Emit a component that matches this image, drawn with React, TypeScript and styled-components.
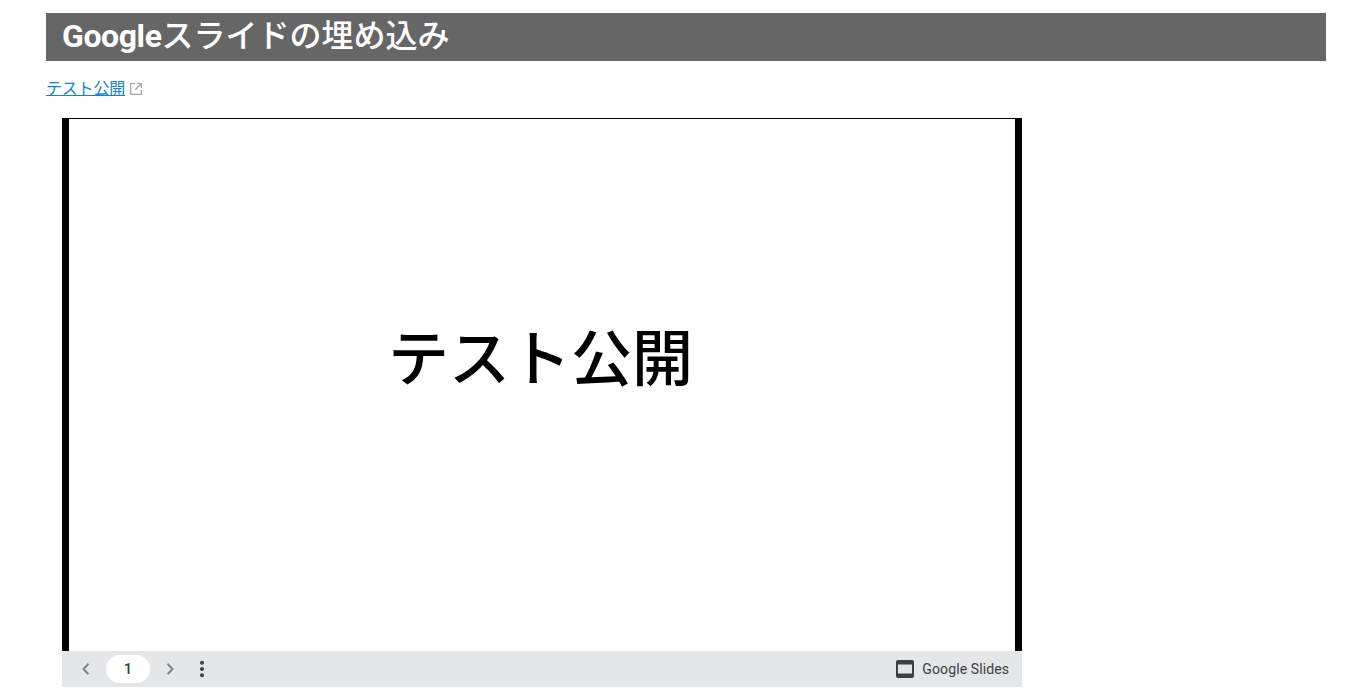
import React from "react";
import styled, { createGlobalStyle } from "styled-components";

const Global = createGlobalStyle`
  html, body { margin: 0; padding: 0; background: #fff; }
  body { font-family: Roboto, "Noto Sans CJK JP", sans-serif; color: #333; overflow: hidden; }
`;
const Page = styled.main`
  width: 1280px;
  margin-left: 46px;
  padding-top: 13px;
`;
const Title = styled.h2`
  margin: 0;
  height: 48px;
  padding: 0 16px;
  background: #666;
  color: #fff;
  font-size: 32px;
  font-weight: 700;
  line-height: 46px;
`;
const TitleLatin = styled.span`
  letter-spacing: -0.4px;
`;
const TitleKana = styled.span`
  font-weight: 500;
`;
const LinkRow = styled.p`
  margin: 0;
  padding-top: 18px;
  height: 40px;
  box-sizing: border-box;
  display: flex;
  align-items: flex-start;
  gap: 4px;
  font-size: 16px;
  line-height: 20px;
`;
const TextLink = styled.a`
  color: #0f83d6;
  text-decoration: underline;
  letter-spacing: -0.2px;
`;
const ExternalIcon = styled.svg`
  width: 14px;
  height: 14px;
  margin-top: 3px;
  color: #aaa;
`;
const Embed = styled.section`
  width: 960px;
  height: 569px;
  margin: 17px 0 0 16px;
  display: flex;
  flex-direction: column;
`;
const Slide = styled.div`
  flex: 1;
  box-sizing: border-box;
  border-top: 1px solid #000;
  border-left: 7px solid #000;
  border-right: 7px solid #000;
  padding: 0 3px 50px 0;
  display: flex;
  align-items: center;
  justify-content: center;
  background: #fff;
`;
const SlideText = styled.div`
  font-family: "Liberation Sans", "Noto Sans CJK JP", sans-serif;
  font-size: 61px;
  font-weight: 500;
  line-height: 80px;
  color: #000;
`;
const Bar = styled.div`
  height: 36px;
  flex: none;
  background: #e5e6e8;
  display: flex;
  align-items: center;
  padding: 0 13px 0 16px;
  color: #3c4043;
`;
const Chevron = styled.svg`
  width: 16px;
  height: 16px;
  color: #80868b;
`;
const PageNumber = styled.div`
  width: 44px;
  height: 28px;
  margin: 0 12px;
  border-radius: 14px;
  background: #fff;
  text-align: center;
  font-size: 15px;
  font-weight: 500;
  line-height: 29px;
`;
const Dots = styled.svg`
  width: 6px;
  height: 18px;
  margin-left: 21px;
  color: #3c4043;
`;
const Brand = styled.div`
  margin-left: auto;
  display: flex;
  align-items: center;
  gap: 8px;
  font-size: 14px;
  letter-spacing: 0.1px;
`;
const SlidesIcon = styled.svg`
  width: 18px;
  height: 18px;
`;

export default function App() {
  return (
    <>
      <Global />
      <Page>
        <Title>
          <TitleLatin>Google</TitleLatin>
          <TitleKana>スライドの埋め込み</TitleKana>
        </Title>
        <LinkRow>
          <TextLink href="#">テスト公開</TextLink>
          <ExternalIcon viewBox="0 0 14 14" fill="none" stroke="currentColor" strokeWidth="1.4">
            <path d="M6 1.6H1.6v10.8h10.8V8" />
            <path d="M8 1.6h4.4V6M12.2 1.8 6 8" />
          </ExternalIcon>
        </LinkRow>
        <Embed>
          <Slide>
            <SlideText>テスト公開</SlideText>
          </Slide>
          <Bar>
            <Chevron viewBox="0 0 16 16" fill="none" stroke="currentColor" strokeWidth="2">
              <path d="M10.5 2.8 5.5 8l5 5.2" />
            </Chevron>
            <PageNumber>1</PageNumber>
            <Chevron viewBox="0 0 16 16" fill="none" stroke="currentColor" strokeWidth="2">
              <path d="M5.5 2.8 10.5 8l-5 5.2" />
            </Chevron>
            <Dots viewBox="0 0 6 18" fill="currentColor">
              <circle cx="3" cy="2.8" r="2" />
              <circle cx="3" cy="9" r="2" />
              <circle cx="3" cy="15.2" r="2" />
            </Dots>
            <Brand>
              <SlidesIcon viewBox="0 0 18 18">
                <path fillRule="evenodd" fill="#3c4043" d="M2 0h14a2 2 0 0 1 2 2v14a2 2 0 0 1-2 2H2a2 2 0 0 1-2-2V2a2 2 0 0 1 2-2Zm0 4.5v9h14v-9Z" />
              </SlidesIcon>
              Google Slides
            </Brand>
          </Bar>
        </Embed>
      </Page>
    </>
  );
}
